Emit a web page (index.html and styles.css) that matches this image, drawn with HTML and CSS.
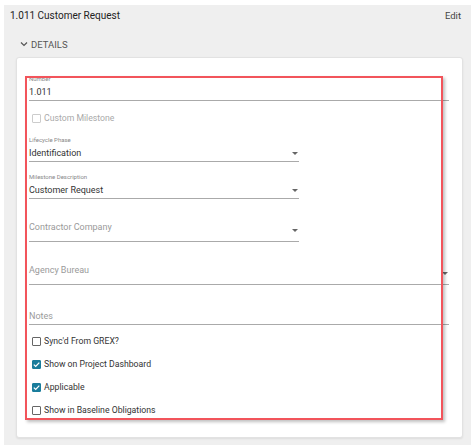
FILE: index.html
```html
<!DOCTYPE html>
<html>
<head>
<meta charset="utf-8">
<link rel="stylesheet" href="styles.css">
</head>
<body>
<div class="page">
  <div class="header">
    <span class="title">1.011 Customer Request</span>
    <span class="edit">Edit</span>
  </div>
  <div class="section">
    <div class="section-head">
      <svg class="chev" width="8" height="6" viewBox="0 0 8 6"><path d="M1 1.5 L4 4.5 L7 1.5" fill="none" stroke="#555" stroke-width="1.2"/></svg>
      <span>DETAILS</span>
    </div>
    <div class="card">
      <div class="form">
        <div class="field full">
          <div class="label">Number</div>
          <div class="value">1.011</div>
        </div>
        <div class="check disabled first">
          <span class="box"></span><span>Custom Milestone</span>
        </div>
        <div class="field half select lifecycle">
          <div class="label">Lifecycle Phase</div>
          <div class="value-row"><span class="value">Identification</span><span class="arrow"></span></div>
        </div>
        <div class="field half select milestone">
          <div class="label">Milestone Description</div>
          <div class="value-row"><span class="value">Customer Request</span><span class="arrow"></span></div>
        </div>
        <div class="field half empty contractor">
          <span class="placeholder">Contractor Company</span><span class="arrow"></span>
        </div>
        <div class="field full empty agency">
          <span class="placeholder">Agency Bureau</span><span class="arrow"></span>
        </div>
        <div class="field full empty notes">
          <span class="placeholder">Notes</span>
        </div>
        <div class="checks">
          <div class="check"><span class="box"></span><span>Sync'd From GREX?</span></div>
          <div class="check"><span class="box on"><svg width="9" height="9" viewBox="0 0 9 9"><path d="M1.8 4.6 L3.7 6.4 L7.3 2.6" fill="none" stroke="#fff" stroke-width="1.3"/></svg></span><span>Show on Project Dashboard</span></div>
          <div class="check"><span class="box on"><svg width="9" height="9" viewBox="0 0 9 9"><path d="M1.8 4.6 L3.7 6.4 L7.3 2.6" fill="none" stroke="#fff" stroke-width="1.3"/></svg></span><span>Applicable</span></div>
          <div class="check"><span class="box"></span><span>Show in Baseline Obligations</span></div>
        </div>
      </div>
      <div class="highlight"></div>
    </div>
  </div>
</div>
</body>
</html>
```

FILE: styles.css
```css
html, body {
  margin: 0;
  padding: 0;
  background: #ffffff;
}
body {
  font-family: Roboto, "Liberation Sans", sans-serif;
  color: #333;
}
.page {
  margin: 5px 0 0 4px;
  height: 440px;
  background: #efefef;
  overflow: hidden;
}
.header {
  display: flex;
  justify-content: space-between;
  align-items: center;
  height: 21px;
  padding: 0 10px 0 6px;
}
.title {
  font-size: 10px;
  color: #222;
}
.edit {
  font-size: 9.5px;
  color: #444;
}
.section {
  padding: 0 4px 0 12px;
}
.section-head {
  display: flex;
  align-items: center;
  height: 26px;
  padding: 5px 0 0 4px;
  font-size: 9.5px;
  color: #555;
}
.chev {
  margin-right: 3px;
}
.card {
  position: relative;
  width: 447px;
  height: 381px;
  box-sizing: border-box;
  background: #fff;
  border: 1px solid #e2e2e2;
  border-radius: 3px;
  box-shadow: 0 1px 2px rgba(0,0,0,0.08);
  padding: 17px 13px 0 12px;
}
.form {
  display: flex;
  flex-direction: column;
}
.field {
  border-bottom: 1px solid #aaa;
  box-sizing: border-box;
}
.field.full { width: 420px; }
.field.half { width: 270px; }
.label {
  font-size: 6px;
  line-height: 8px;
  color: #888;
  height: 8px;
}
.value {
  font-size: 9px;
  line-height: 14px;
  color: #333;
}
.label + .value, .label + .value-row {
  margin-top: 2px;
  padding-bottom: 1px;
}
.value-row {
  display: flex;
  justify-content: space-between;
  align-items: center;
}
.arrow {
  width: 0;
  height: 0;
  border-left: 3px solid transparent;
  border-right: 3px solid transparent;
  border-top: 3px solid #666;
  margin-right: 1px;
}
.lifecycle { margin-top: 11px; }
.milestone { margin-top: 11px; }
.empty {
  display: flex;
  justify-content: space-between;
  align-items: flex-start;
}
.placeholder {
  font-size: 9px;
  line-height: 14px;
  color: #9a9a9a;
}
.contractor {
  height: 43px;
  padding-top: 21px;
}
.contractor .arrow, .agency .arrow {
  margin-top: 9px;
}
.agency {
  height: 43px;
  padding-top: 21px;
}
.notes {
  height: 40px;
  padding-top: 24px;
}
.check {
  display: flex;
  align-items: center;
  height: 14px;
  font-size: 8.7px;
  color: #333;
}
.check .box {
  width: 9px;
  height: 9px;
  box-sizing: border-box;
  border: 1px solid #666;
  border-radius: 1px;
  margin: 0 3px 0 3px;
  display: flex;
}
.check .box.on {
  background: #1a7d9c;
  border-color: #1a7d9c;
}
.check .box.on svg {
  margin: -1px;
}
.check.disabled {
  color: #aaa;
}
.check.disabled .box {
  border-color: #ccc;
}
.check.first {
  margin-top: 10px;
}
.checks {
  display: flex;
  flex-direction: column;
  gap: 9px;
  margin-top: 9px;
}
.highlight {
  position: absolute;
  left: 8px;
  top: 18px;
  width: 418px;
  height: 344px;
  box-sizing: border-box;
  border: 2px solid #f2545b;
  box-shadow: 2px 2px 3px rgba(0,0,0,0.25);
  pointer-events: none;
}
```
